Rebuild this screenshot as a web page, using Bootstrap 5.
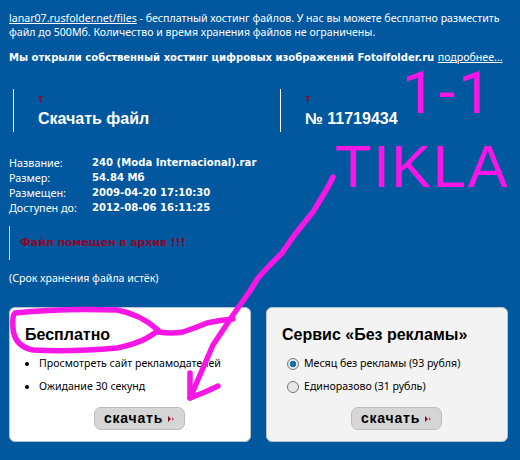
<!DOCTYPE html>
<html lang="ru">
<head>
    <meta charset="UTF-8">
    <title>Скачать файл</title>
    <link href="https://cdn.jsdelivr.net/npm/bootstrap@5.3.0/dist/css/bootstrap.min.css" rel="stylesheet">
    <style>
        body {
            background-color: #01589f;
            color: #fff;
            font-family: "Noto Sans", sans-serif;
            font-size: 11px;
            line-height: 15px;
            width: 520px;
            height: 460px;
            overflow: hidden;
            position: relative;
        }
        a { color: #fff; }
        .page-wrap { padding: 11px 12px 0 9px; }
        .intro-text { height: 39px; margin: 0; font-size: 10.6px; line-height: 14px; }
        .promo-text { margin: 0; font: 700 10.05px/14px "DejaVu Sans", sans-serif; white-space: nowrap; }
        .promo-text a { font: 400 10.6px/14px "Noto Sans", sans-serif; }
        .head-row { margin: 24px 0 0 4px; }
        .head-block { border-left: 1px solid #fff; height: 43px; padding-left: 24px; width: 267px; flex: none; }
        .head-block + .head-block { width: 200px; }
        .head-mark { width: 5px; height: 7px; margin-top: 7px; display: block; }
        .head-title { font: 700 16px/18px "Liberation Sans", sans-serif; margin: 7px 0 0; }
        .file-info { margin-top: 23px; font-size: 10.8px; }
        .info-label { width: 83px; }
        .info-value { font: 700 10.1px/15px "DejaVu Sans", sans-serif; }
        .archive-note { border-left: 1px solid #c6d6e4; height: 34px; margin-top: 11px; padding-left: 10px; color: #8a0a2c; font: 700 10.9px/34px "DejaVu Sans", sans-serif; }
        .expire-note { margin: 11px 0 0; font-size: 10.6px; }
        .plan-row { margin-top: 21px; gap: 15px; }
        .plan-box { width: 242px; height: 135px; background: #fff; color: #000; border: 1px solid #b9c3cc; border-radius: 6px; padding: 17px 15px 0; }
        .plan-box.plan-alt { background: #f3f3f3; }
        .plan-title { font: 700 16px/20px "Liberation Sans", sans-serif; margin: 0; }
        .plan-list { margin: 11px 0 0; padding: 0 0 0 14px; list-style: disc; font-size: 10.6px; }
        .plan-list li { height: 23px; }
        .plan-radio { height: 23px; padding-left: 5px; font-size: 10.6px; gap: 5px; }
        .plan-radios { margin-top: 7px; }
        .radio-dot { width: 12px; height: 12px; border-radius: 50%; border: 1px solid #777; background: #e8e8e8; flex: none; }
        .radio-dot.is-on { background: radial-gradient(circle, #1273ac 0 3px, #e8e8e8 3.5px); }
        .get-btn { width: 91px; height: 23px; background: #d6d6d6; color: #000; border: 1px solid #bcbcbc; border-radius: 7px; font: 700 14px/21px "Liberation Sans", sans-serif; letter-spacing: .8px; gap: 5px; }
        .btn-slot { margin-top: 5px; margin-left: 69px; }
        .plan-radios + .btn-slot { margin-top: 9px; }
        .scrawl { position: absolute; left: 0; top: 0; pointer-events: none; }
        .scrawl-text { position: absolute; color: #f716e6; font: 400 60px/60px "Liberation Sans", sans-serif; }
        .scrawl-one { left: 402px; top: 63px; font-family: Roboto, sans-serif; letter-spacing: 3px; }
        .scrawl-two { left: 335px; top: 137px; letter-spacing: 1.5px; }
    </style>
</head>
<body>
<div class="page-wrap">
    <p class="intro-text"><a href="#">lanar07.rusfolder.net/files</a> - бесплатный хостинг файлов. У нас вы можете бесплатно разместить файл до 500Мб. Количество и время хранения файлов не ограничены.</p>
    <p class="promo-text">Мы открыли собственный хостинг цифровых изображений Fotoifolder.ru <a href="#">подробнее...</a></p>

    <div class="d-flex head-row">
        <div class="head-block">
            <svg class="head-mark" viewBox="0 0 5 7"><path d="M0 0h5L2.5 3zM1 3h3L2.5 7z" fill="#8a0a2c"/></svg>
            <p class="head-title">Скачать файл</p>
        </div>
        <div class="head-block">
            <svg class="head-mark" viewBox="0 0 5 7"><path d="M0 0h5L2.5 3zM1 3h3L2.5 7z" fill="#8a0a2c"/></svg>
            <p class="head-title">№ 11719434</p>
        </div>
    </div>

    <div class="file-info">
        <div class="d-flex"><div class="info-label">Название:</div><div class="info-value">240 (Moda Internacional).rar</div></div>
        <div class="d-flex"><div class="info-label">Размер:</div><div class="info-value">54.84 Мб</div></div>
        <div class="d-flex"><div class="info-label">Размещен:</div><div class="info-value">2009-04-20 17:10:30</div></div>
        <div class="d-flex"><div class="info-label">Доступен до:</div><div class="info-value">2012-08-06 16:11:25</div></div>
    </div>

    <div class="archive-note">Файл помещен в архив !!!</div>
    <p class="expire-note">(Срок хранения файла истёк)</p>

    <div class="d-flex plan-row">
        <div class="plan-box">
            <h2 class="plan-title">Бесплатно</h2>
            <ul class="plan-list">
                <li>Просмотреть сайт рекламодателей</li>
                <li>Ожидание 30 секунд</li>
            </ul>
            <div class="btn-slot">
                <div class="get-btn d-flex align-items-center justify-content-center">скачать
                    <svg width="7" height="6" viewBox="0 0 7 6"><path d="M0 0l3 3-3 3z" fill="#8a0a2c"/><path d="M4 1l2 2-2 2z" fill="#a8556c"/></svg>
                </div>
            </div>
        </div>
        <div class="plan-box plan-alt">
            <h2 class="plan-title">Сервис «Без рекламы»</h2>
            <div class="plan-radios">
                <div class="plan-radio d-flex align-items-center"><span class="radio-dot is-on"></span>Месяц без рекламы (93 рубля)</div>
                <div class="plan-radio d-flex align-items-center"><span class="radio-dot"></span>Единоразово (31 рубль)</div>
            </div>
            <div class="btn-slot">
                <div class="get-btn d-flex align-items-center justify-content-center">скачать
                    <svg width="7" height="6" viewBox="0 0 7 6"><path d="M0 0l3 3-3 3z" fill="#8a0a2c"/><path d="M4 1l2 2-2 2z" fill="#a8556c"/></svg>
                </div>
            </div>
        </div>
    </div>
</div>

<div class="scrawl-text scrawl-one">1-1</div>
<div class="scrawl-text scrawl-two">TIKLA</div>
<svg class="scrawl" width="520" height="460" fill="none" stroke="#f716e6" stroke-width="5.5" stroke-linecap="round" stroke-linejoin="round">
    <path d="M333 177L328 187L322 197L313 212L300 228L293 237L282 253L270 265L258 278L250 291L245 298L233 315L213 345L190 398"/>
    <path d="M190 373L190 398L205 392L218 386"/>
    <path d="M15 313Q60 308 117 310Q140 314 158 330Q146 342 117 348Q70 352 33 350Q14 346 13 328Q12 316 15 313Z"/>
    <path d="M158 332Q172 334 183 332Q195 328 207 323Q220 320 233 319"/>
</svg>
<script src="https://cdn.jsdelivr.net/npm/bootstrap@5.3.0/dist/js/bootstrap.bundle.min.js"></script>
</body>
</html>
